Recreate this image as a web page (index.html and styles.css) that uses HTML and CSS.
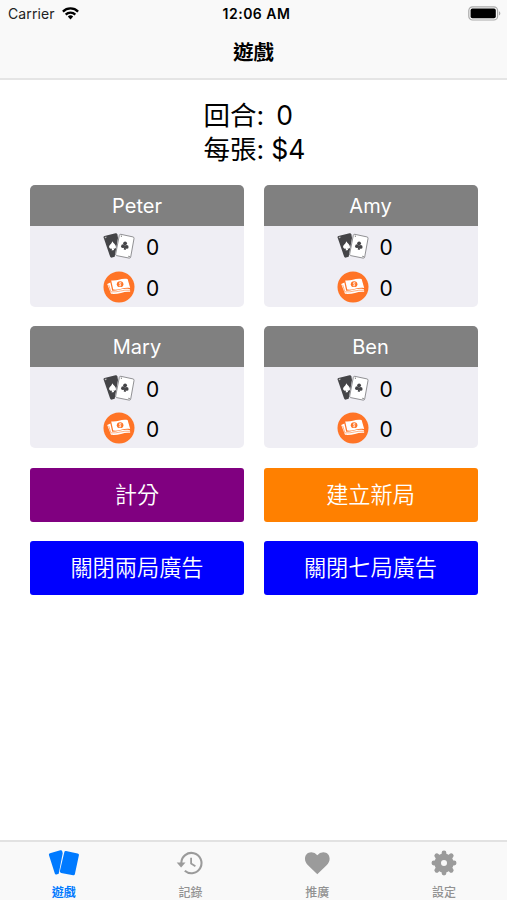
FILE: index.html
```html
<!DOCTYPE html>
<html lang="zh-Hant">
<head>
<meta charset="utf-8">
<title>遊戲</title>
<link rel="stylesheet" href="styles.css">
</head>
<body>
<svg class="defs" aria-hidden="true">
  <symbol id="cards" viewBox="0 0 32 28">
    <path d="M1.5 4 12.5 1.3Q14 1.1 14.4 2.4L15 6 11.7 24.8 9 25.6Q7.6 25.9 7.1 24.6L.6 5.5Q.3 4.3 1.5 4Z" fill="#444447"/>
    <path d="M2.3 6.2v-1h1.2" fill="none" stroke="#eee" stroke-width=".8"/>
    <path d="M9.2 9.2C10.5 11.3 13 12.5 13 15c0 1.5-1.5 2.1-2.5 1.3l.7 1.7-2.5.4.3-2c-1.5.8-2.9-.1-2.9-1.6 0-2 2.8-2.8 3.1-5.6Z" fill="#fff"/>
    <path d="M17.8 2.3 29.9 4.9Q31.3 5.2 31 6.6L27.7 25Q27.4 26.3 26.1 26.1L13.6 23.6Q12.4 23.3 12.7 22L16.3 3.4Q16.6 2.1 17.8 2.3Z" fill="#fff" stroke="#858588" stroke-width=".9"/>
    <g fill="#444447"><circle cx="22.1" cy="11.3" r="1.9"/><circle cx="20" cy="14.2" r="1.9"/><circle cx="23.7" cy="14.9" r="1.9"/><path d="m21.6 12.8-.9 4.8 2.1.3-.1-4.5Z"/></g>
    <path d="M17.8 4 19 4.3M25.4 24.3l1.3.2" stroke="#555" stroke-width=".9"/>
  </symbol>
  <symbol id="money" viewBox="0 0 32 32">
    <circle cx="16" cy="16" r="15.5" fill="#ff7426"/>
    <path d="M4.2 13 7.4 11.6 9.2 19.7C15 19.9 19.6 16.6 27 18.2L27.2 20.8C20.5 20 15.5 23.7 8 22.8Z" fill="#fff"/>
    <path d="M8.2 9.4C14 10.3 18.3 6.7 24.6 8L27.2 16.9C20.8 15.6 16.4 19.4 10.2 18.6Z" fill="#fff"/>
    <path d="M5.7 13.9 7.9 20.9C15 21.7 19.5 18.3 27.2 19.3" fill="none" stroke="#ff7426" stroke-width=".55"/>
    <ellipse cx="17.1" cy="13.2" rx="3.3" ry="2.9" fill="#ff7426"/>
    <path d="M18.5 12c-2-1-3 .4-1.3 1.2 1.6.7.6 2.1-1.4 1.2M17.1 11v4.5" fill="none" stroke="#fff" stroke-width=".65"/>
  </symbol>
</svg>
<div class="app">
  <header>
    <div class="status">
      <div class="carrier">Carrier
        <svg width="17" height="13" viewBox="0 0 17 13"><g fill="none" stroke="#000" stroke-width="2.3"><path d="M.9 4.6a10.8 10.8 0 0 1 15.2 0M3.7 7.6a6.8 6.8 0 0 1 9.6 0"/></g><path d="M5.8 9.6a3.9 3.9 0 0 1 5.4 0L8.5 12.4Z"/></svg>
      </div>
      <div class="time">12:06 AM</div>
      <div class="battery">
        <svg width="33" height="15" viewBox="0 0 33 15"><rect x=".8" y=".8" width="28.8" height="13.2" rx="3.8" fill="none" stroke="#aaa" stroke-width="1.2"/><rect x="2.6" y="2.6" width="25.2" height="9.6" rx="1.8"/><path d="M31 5.3q1.3.5 1.3 2.1T31 9.5Z" fill="#aaa"/></svg>
      </div>
    </div>
    <h1>遊戲</h1>
  </header>
  <main>
    <div class="summary">
      <div class="line"><span>回合:</span><span class="round">0</span></div>
      <div class="line"><span>每張:</span><span class="price">$4</span></div>
    </div>
    <div class="grid">
      <section class="player"><h2>Peter</h2><div class="stats">
        <div class="stat"><svg class="cards"><use href="#cards"/></svg><span>0</span></div>
        <div class="stat"><svg class="money"><use href="#money"/></svg><span>0</span></div></div></section>
      <section class="player"><h2>Amy</h2><div class="stats">
        <div class="stat"><svg class="cards"><use href="#cards"/></svg><span>0</span></div>
        <div class="stat"><svg class="money"><use href="#money"/></svg><span>0</span></div></div></section>
      <section class="player"><h2>Mary</h2><div class="stats">
        <div class="stat"><svg class="cards"><use href="#cards"/></svg><span>0</span></div>
        <div class="stat"><svg class="money"><use href="#money"/></svg><span>0</span></div></div></section>
      <section class="player"><h2>Ben</h2><div class="stats">
        <div class="stat"><svg class="cards"><use href="#cards"/></svg><span>0</span></div>
        <div class="stat"><svg class="money"><use href="#money"/></svg><span>0</span></div></div></section>
      <button class="score">計分</button>
      <button class="new">建立新局</button>
      <button class="ads">關閉兩局廣告</button>
      <button class="ads">關閉七局廣告</button>
    </div>
  </main>
  <nav>
    <a class="tab active">
      <svg width="32" height="28" viewBox="0 0 32 28"><path d="M3 4.2 13.3 1.3q1.5-.4 1.9 1l.5 2-4 20.5-2.2.7q-1.3.4-1.7-.9L2 6.2Q1.6 4.6 3 4.2ZM19 2 30.6 4.4q1.6.4 1.3 1.9L27.9 25q-.3 1.5-1.7 1.2L14.1 23.9q-1.5-.3-1.2-1.8L17.3 3.2Q17.6 1.7 19 2Z"/></svg>
      <span>遊戲</span></a>
    <a class="tab">
      <svg width="28" height="28" viewBox="0 0 28 28"><g fill="none" stroke="#9b9b9b" stroke-width="2.1"><path d="M5.3 14A10.1 10.1 0 1 1 8.8 21.7"/><path d="M15.1 8.8v5.8l4.3 2.6" stroke-width="1.8"/></g><path d="M.7 13.6H9.5L5.1 18.4Z"/></svg>
      <span>記錄</span></a>
    <a class="tab">
      <svg width="28" height="28" viewBox="0 0 28 28"><path d="M14.3 25.2 5 16.2C-.4 11 1.9 3.2 8.3 3.2q3.7 0 6 3 2.3-3 6-3c6.4 0 8.7 7.8 3.3 13Z"/></svg>
      <span>推廣</span></a>
    <a class="tab">
      <svg width="28" height="28" viewBox="0 0 28 28"><g fill="none" stroke="#9b9b9b" stroke-width="4.8" stroke-linecap="round"><path d="M14 3.9v2M14 22.1v2M3.9 14h2M22.1 14h2M6.8 6.8l1.2 1.2M20 20l1.2 1.2M6.8 21.2l1.2-1.2M20 8l1.2-1.2"/><circle cx="14" cy="14" r="6.3" stroke-width="6.6"/></g></svg>
      <span>設定</span></a>
  </nav>
</div>
</body>
</html>
```
FILE: styles.css
```css
* { box-sizing: border-box; }
body { margin: 0; font-family: Inter, "Noto Sans CJK TC", sans-serif; color: #000; background: #fff; }
.defs { display: none; }
.app { height: 900px; display: flex; flex-direction: column; overflow: hidden; }
header { height: 80px; flex: none; background: #f9f9f9; border-bottom: 2px solid #e5e5e5; }
.status { height: 27px; display: grid; grid-template-columns: 1fr auto 1fr; align-items: center; padding: 0 6px 0 8px; font-size: 14px; }
.carrier { display: flex; align-items: center; gap: 7px; letter-spacing: .1px; color: #222; }
.time { font-weight: 600; letter-spacing: .5px; padding-left: 4px; }
.battery { display: flex; justify-content: flex-end; }
h1 { margin: 11px 0 0; font-size: 20.5px; line-height: 30px; font-weight: 700; text-align: center; }
main { flex: 1; padding: 17.5px 29.5px 0 30px; }
.summary { width: 102px; height: 87.1px; margin-left: 173.5px; font-size: 26.5px; }
.line { height: 34px; line-height: 34px; display: flex; white-space: nowrap; }
.round { margin-left: 12px; }
.price { margin-left: 7px; }
.grid { display: grid; grid-template-columns: 1fr 1fr; grid-template-rows: 122px 122px 54px 54px; gap: 19.5px; }
.player { border-radius: 5px; background: #efeef4; overflow: hidden; }
h2 { margin: 0; height: 41px; line-height: 42px; font-size: 20px; font-weight: 400; color: #fff; background: #808080; text-align: center; }
.stats { padding: 2px 0 0 73px; }
.stat { height: 40.5px; display: flex; align-items: center; gap: 11px; font-size: 21px; }
.cards { width: 32px; height: 28px; margin-bottom: 3px; }
.money { width: 32px; height: 32px; margin-bottom: 3px; }
button { border: 0; border-radius: 3px; padding: 0; color: #fff; font: 350 22.2px/54px Inter, "Noto Sans CJK TC", sans-serif; }
.score { background: #800080; }
.new { background: #ff8000; }
.ads { background: #00f; }
nav { height: 60.5px; flex: none; display: grid; grid-template-columns: repeat(4, 1fr); background: #f9f9f9; border-top: 2px solid #e2e2e2; }
.tab { display: flex; flex-direction: column; align-items: center; padding-top: 7.5px; fill: #9b9b9b; color: #929292; font-size: 12px; font-weight: 500; line-height: 16px; }
.tab span { margin: 7.5px 0 0 1px; }
.active { color: #007aff; fill: #007aff; font-weight: 700; }
```
